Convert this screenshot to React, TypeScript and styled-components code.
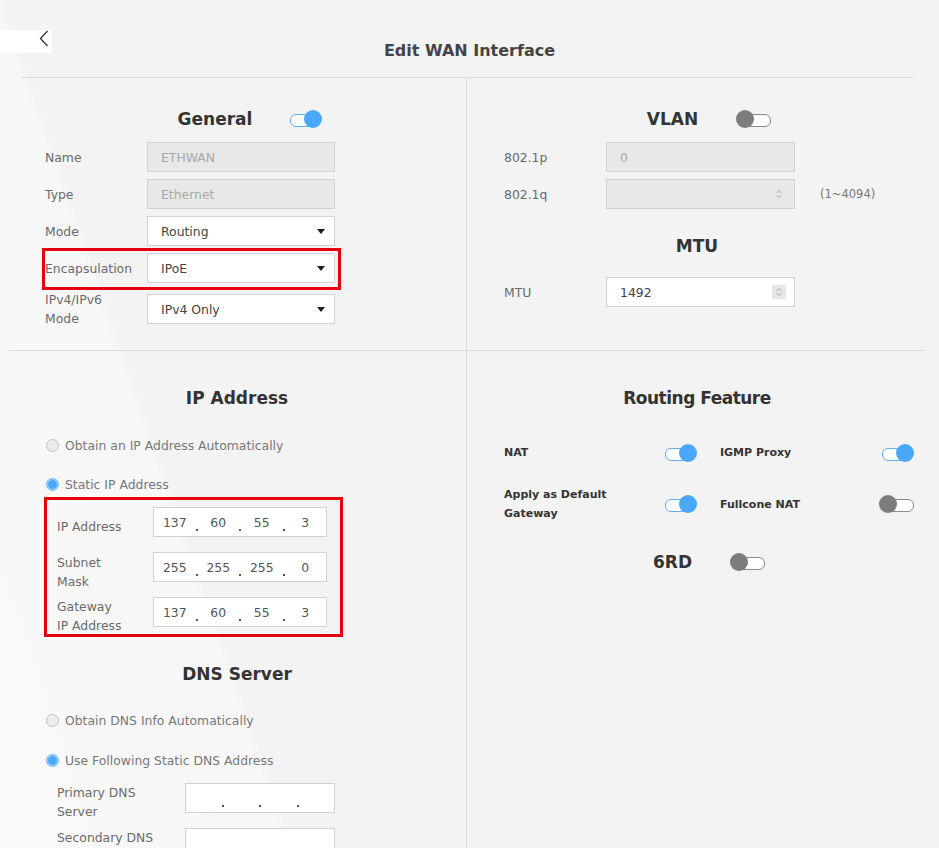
import styled, { createGlobalStyle } from "styled-components";

const GlobalStyle = createGlobalStyle`
  * {
    box-sizing: border-box;
  }

  html, body {
    margin: 0;
    padding: 0;
    background: #f3f3f3;
    font-family: "DejaVu Sans", "Liberation Sans", sans-serif;
  }
`;

const Page = styled.div`
  width: 939px;
  height: 848px;
  overflow: hidden;
  background: linear-gradient(71deg, #f9f9f9 0%, #f7f7f7 23.3%, #f3f3f3 23.9%, #f3f3f3 100%);
`;

const Header = styled.header`
  display: grid;
  grid-template-columns: 52px 1fr 52px;
  height: 77px;
`;

const BackButton = styled.button`
  margin-top: 30px;
  width: 52px;
  height: 23px;
  padding: 0 3px 0 0;
  border: 0;
  background: #fff;
  display: flex;
  justify-content: flex-end;
  align-items: flex-start;
`;

const Title = styled.h1`
  margin: 40px 0 0;
  font-size: 16px;
  line-height: 22px;
  font-weight: bold;
  text-align: center;
  color: #444;
`;

const HeaderRule = styled.div`
  height: 1px;
  margin: 0 26px 0 21px;
  background: #dadada;
`;

const Panels = styled.div`
  display: grid;
  grid-template-columns: 467px 472px;
`;

const MidRule = styled.div`
  grid-column: 1 / -1;
  height: 1px;
  margin: 0 14px 0 9px;
  background: #dadada;
`;

const Cell = styled.section<{ $right?: boolean; $top: number; $bottom?: number }>`
  padding: ${(p) => p.$top}px ${(p) => (p.$right ? 49 : 37)}px ${(p) => p.$bottom ?? 0}px
    ${(p) => (p.$right ? 37 : 45)}px;
  border-right: ${(p) => (p.$right ? "none" : "1px solid #dadada")};
  display: flex;
  flex-direction: column;
  align-items: flex-start;
`;

const HeadingRow = styled.div<{ $offset?: number; $mt?: number }>`
  align-self: stretch;
  display: flex;
  justify-content: center;
  align-items: center;
  gap: 38px;
  height: 24px;
  margin-top: ${(p) => p.$mt ?? 0}px;
  padding-left: ${(p) => p.$offset ?? 0}px;
`;

const Heading = styled.h2<{ $tight?: boolean }>`
  margin: 0;
  font-size: 17px;
  line-height: 24px;
  font-weight: bold;
  letter-spacing: ${(p) => (p.$tight ? "-0.5px" : "0")};
  color: #333;
`;

const Switch = styled.span<{ $on?: boolean }>`
  position: relative;
  display: inline-block;
  flex: none;
  width: ${(p) => (p.$on ? 32 : 35)}px;
  height: 18px;

  &::before {
    content: "";
    position: absolute;
    top: 4px;
    height: 11px;
    left: ${(p) => (p.$on ? "0" : "7px")};
    right: ${(p) => (p.$on ? "7px" : "0")};
    border: 1.5px solid ${(p) => (p.$on ? "#5cb2f7" : "#8a8a8a")};
    border-radius: 6px;
    background: #fff;
  }

  &::after {
    content: "";
    position: absolute;
    top: 0;
    left: ${(p) => (p.$on ? "14px" : "0")};
    width: 18px;
    height: 18px;
    border-radius: 50%;
    background: ${(p) => (p.$on ? "#4aa8fb" : "#7c7c7c")};
  }
`;

const FieldList = styled.div<{ $mt: number; $gap: number; $indent?: number }>`
  display: flex;
  flex-direction: column;
  align-items: flex-start;
  gap: ${(p) => p.$gap}px;
  margin-top: ${(p) => p.$mt}px;
  margin-left: ${(p) => p.$indent ?? 0}px;
`;

const Field = styled.div<{ $label: number }>`
  display: grid;
  grid-template-columns: ${(p) => p.$label}px auto auto;
  grid-template-rows: 30px;
  height: 30px;
  align-items: center;
`;

const Label = styled.span<{ $shift?: number }>`
  font-size: 12.4px;
  line-height: 19px;
  padding-top: ${(p) => p.$shift ?? 0}px;
  color: #6a6a6a;
  white-space: nowrap;
`;

const Box = styled.div<{ $w: number; $disabled?: boolean }>`
  width: ${(p) => p.$w}px;
  height: 30px;
  padding: 0 9px 0 13px;
  border: 1px solid #cfd3d8;
  background: ${(p) => (p.$disabled ? "#e8e8e8" : "#fff")};
  color: ${(p) => (p.$disabled ? "#a9a9a9" : "#444")};
  font-size: 12.4px;
  display: flex;
  align-items: center;
  justify-content: space-between;
`;

const Spin = styled.span<{ $shaded?: boolean }>`
  width: 14px;
  height: 14px;
  margin-right: -1px;
  display: flex;
  align-items: center;
  justify-content: center;
  background: ${(p) => (p.$shaded ? "#e6e6ea" : "transparent")};
`;

const Hint = styled.span`
  margin-left: 25px;
  font-size: 11.5px;
  color: #777;
`;

const Highlight = styled.div<{ $pad: string; $margin: string; $gap?: number }>`
  display: flex;
  flex-direction: column;
  gap: ${(p) => p.$gap ?? 0}px;
  border: 3px solid #e4000f;
  padding: ${(p) => p.$pad};
  margin: ${(p) => p.$margin};
`;

const IpBox = styled.div<{ $w: number }>`
  width: ${(p) => p.$w}px;
  height: 30px;
  border: 1px solid #cfd3d8;
  background: #fff;
  display: flex;
  align-items: center;
`;

const Octet = styled.span`
  flex: 1;
  text-align: center;
  font-size: 12.4px;
  color: #555;
`;

const Dot = styled.span`
  flex: none;
  width: 2px;
  height: 2px;
  align-self: flex-end;
  margin-bottom: 5px;
  background: #555;
`;

const RadioRow = styled.label<{ $mt: number }>`
  display: flex;
  align-items: center;
  gap: 6px;
  height: 20px;
  margin-top: ${(p) => p.$mt}px;
  font-size: 12.4px;
  color: #777;
`;

const RadioMark = styled.span<{ $checked?: boolean }>`
  width: 13px;
  height: 13px;
  margin-left: 1px;
  border-radius: 50%;
  border: 1px solid ${(p) => (p.$checked ? "#7cc0f8" : "#c2c2c2")};
  background: ${(p) => (p.$checked ? "#4aa8fb" : "#ececec")};
  box-shadow: ${(p) => (p.$checked ? "inset 0 0 0 1px #a9d6fb" : "none")};
`;

const FeatureGrid = styled.div`
  display: grid;
  grid-template-columns: 193px 194px;
  column-gap: 23px;
  row-gap: 23px;
  margin-top: 33px;
`;

const Feature = styled.div`
  display: flex;
  justify-content: space-between;
  align-items: center;
`;

const FeatureLabel = styled.span`
  max-width: 130px;
  font-size: 11px;
  line-height: 19px;
  font-weight: bold;
  color: #333;
`;

const Caret = () => (
  <svg width="8" height="5" viewBox="0 0 8 5">
    <path d="M0 0H8L4 5Z" fill="#1e1e1e" />
  </svg>
);

const Arrows = ({ shaded }: { shaded?: boolean }) => (
  <Spin $shaded={shaded}>
    <svg width="6" height="10" viewBox="0 0 6 10">
      <path d="M0.6 4L3 1.4L5.4 4M0.6 6L3 8.6L5.4 6" fill="none" stroke="#a6a6a6" strokeWidth="1" />
    </svg>
  </Spin>
);

const Select = ({ value }: { value: string }) => (
  <Box $w={188}>
    {value}
    <Caret />
  </Box>
);

const Ip = ({ w, parts }: { w: number; parts: string[] }) => (
  <IpBox $w={w}>
    <Octet>{parts[0]}</Octet>
    <Dot />
    <Octet>{parts[1]}</Octet>
    <Dot />
    <Octet>{parts[2]}</Octet>
    <Dot />
    <Octet>{parts[3]}</Octet>
  </IpBox>
);

export default function App() {
  return (
    <Page>
      <GlobalStyle />
      <Header>
        <BackButton aria-label="Back">
          <svg width="10" height="17" viewBox="0 0 10 17">
            <path d="M8.5 1L1.5 8.5L8.5 16" fill="none" stroke="#333" strokeWidth="1.3" />
          </svg>
        </BackButton>
        <Title>Edit WAN Interface</Title>
      </Header>
      <HeaderRule />
      <Panels>
        <Cell $top={29} $bottom={26}>
          <HeadingRow $offset={26}>
            <Heading>General</Heading>
            <Switch $on />
          </HeadingRow>
          <FieldList $mt={11} $gap={7}>
            <Field $label={102}>
              <Label>Name</Label>
              <Box $w={188} $disabled>
                ETHWAN
              </Box>
            </Field>
            <Field $label={102}>
              <Label>Type</Label>
              <Box $w={188} $disabled>
                Ethernet
              </Box>
            </Field>
            <Field $label={102}>
              <Label>Mode</Label>
              <Select value="Routing" />
            </Field>
            <Highlight $pad="2px 3px 4px 0" $margin="-5px 0 -3px -3px">
              <Field $label={102}>
                <Label>Encapsulation</Label>
                <Select value="IPoE" />
              </Field>
            </Highlight>
            <Field $label={102}>
              <Label>
                IPv4/IPv6
                <br />
                Mode
              </Label>
              <Select value="IPv4 Only" />
            </Field>
          </FieldList>
        </Cell>

        <Cell $right $top={29}>
          <HeadingRow $offset={24}>
            <Heading>VLAN</Heading>
            <Switch />
          </HeadingRow>
          <FieldList $mt={11} $gap={7}>
            <Field $label={102}>
              <Label>802.1p</Label>
              <Box $w={189} $disabled>
                0
              </Box>
            </Field>
            <Field $label={102}>
              <Label>802.1q</Label>
              <Box $w={189} $disabled>
                <span />
                <Arrows />
              </Box>
              <Hint>(1~4094)</Hint>
            </Field>
          </FieldList>
          <HeadingRow $mt={25}>
            <Heading>MTU</Heading>
          </HeadingRow>
          <FieldList $mt={19} $gap={7}>
            <Field $label={102}>
              <Label>MTU</Label>
              <Box $w={189}>
                1492
                <Arrows shaded />
              </Box>
            </Field>
          </FieldList>
        </Cell>

        <MidRule />

        <Cell $top={35}>
          <HeadingRow>
            <Heading>IP Address</Heading>
          </HeadingRow>
          <RadioRow $mt={25}>
            <RadioMark />
            Obtain an IP Address Automatically
          </RadioRow>
          <RadioRow $mt={19}>
            <RadioMark $checked />
            Static IP Address
          </RadioRow>
          <Highlight $pad="7px 13px 7px 10px" $margin="3px 0 0 -1px" $gap={15}>
            <Field $label={96}>
              <Label $shift={9}>IP Address</Label>
              <Ip w={174} parts={["137", "60", "55", "3"]} />
            </Field>
            <Field $label={96}>
              <Label $shift={9}>
                Subnet
                <br />
                Mask
              </Label>
              <Ip w={174} parts={["255", "255", "255", "0"]} />
            </Field>
            <Field $label={96}>
              <Label $shift={8}>
                Gateway
                <br />
                IP Address
              </Label>
              <Ip w={174} parts={["137", "60", "55", "3"]} />
            </Field>
          </Highlight>
          <HeadingRow $mt={25}>
            <Heading>DNS Server</Heading>
          </HeadingRow>
          <RadioRow $mt={24}>
            <RadioMark />
            Obtain DNS Info Automatically
          </RadioRow>
          <RadioRow $mt={20}>
            <RadioMark $checked />
            Use Following Static DNS Address
          </RadioRow>
          <FieldList $mt={13} $gap={15} $indent={12}>
            <Field $label={128}>
              <Label $shift={7}>
                Primary DNS
                <br />
                Server
              </Label>
              <Ip w={150} parts={["", "", "", ""]} />
            </Field>
            <Field $label={128}>
              <Label $shift={7}>
                Secondary DNS
                <br />
                Server
              </Label>
              <Ip w={150} parts={["", "", "", ""]} />
            </Field>
          </FieldList>
        </Cell>

        <Cell $right $top={35}>
          <HeadingRow>
            <Heading $tight>Routing Feature</Heading>
          </HeadingRow>
          <FeatureGrid>
            <Feature>
              <FeatureLabel>NAT</FeatureLabel>
              <Switch $on />
            </Feature>
            <Feature>
              <FeatureLabel>IGMP Proxy</FeatureLabel>
              <Switch $on />
            </Feature>
            <Feature>
              <FeatureLabel>Apply as Default Gateway</FeatureLabel>
              <Switch $on />
            </Feature>
            <Feature>
              <FeatureLabel>Fullcone NAT</FeatureLabel>
              <Switch />
            </Feature>
          </FeatureGrid>
          <HeadingRow $offset={24} $mt={27}>
            <Heading>6RD</Heading>
            <Switch />
          </HeadingRow>
        </Cell>
      </Panels>
    </Page>
  );
}
